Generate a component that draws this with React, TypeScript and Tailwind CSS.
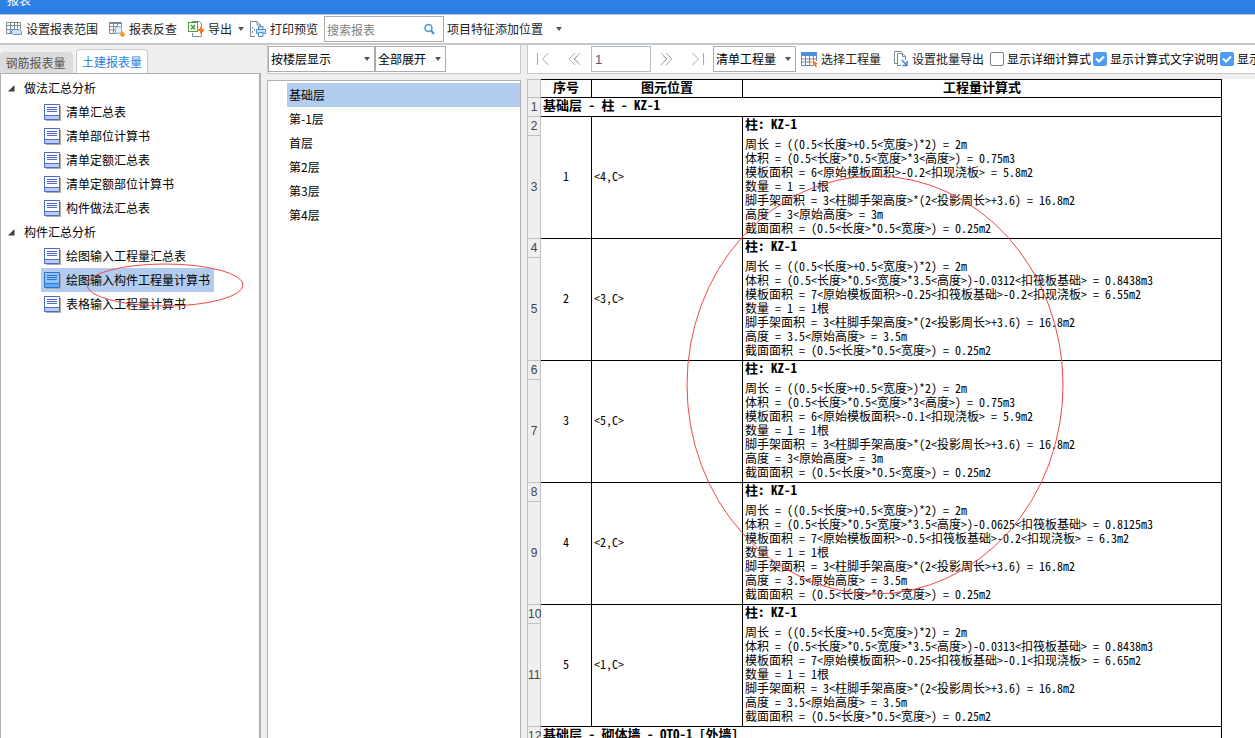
import React, { useState } from 'react';
import clsx from 'clsx';

const treeGroups = [
  {
    title: '做法汇总分析',
    items: ['清单汇总表', '清单部位计算书', '清单定额汇总表', '清单定额部位计算书', '构件做法汇总表'],
  },
  {
    title: '构件汇总分析',
    items: ['绘图输入工程量汇总表', '绘图输入构件工程量计算书', '表格输入工程量计算书'],
  },
];

const floors = ['基础层', '第-1层', '首层', '第2层', '第3层', '第4层'];

const entries = [
  {
    position: '<4,C>',
    volume: '体积 = (0.5<长度>*0.5<宽度>*3<高度>) = 0.75m3',
    formwork: '模板面积 = 6<原始模板面积>-0.2<扣现浇板> = 5.8m2',
    height: '高度 = 3<原始高度> = 3m',
  },
  {
    position: '<3,C>',
    volume: '体积 = (0.5<长度>*0.5<宽度>*3.5<高度>)-0.0312<扣筏板基础> = 0.8438m3',
    formwork: '模板面积 = 7<原始模板面积>-0.25<扣筏板基础>-0.2<扣现浇板> = 6.55m2',
    height: '高度 = 3.5<原始高度> = 3.5m',
  },
  {
    position: '<5,C>',
    volume: '体积 = (0.5<长度>*0.5<宽度>*3<高度>) = 0.75m3',
    formwork: '模板面积 = 6<原始模板面积>-0.1<扣现浇板> = 5.9m2',
    height: '高度 = 3<原始高度> = 3m',
  },
  {
    position: '<2,C>',
    volume: '体积 = (0.5<长度>*0.5<宽度>*3.5<高度>)-0.0625<扣筏板基础> = 0.8125m3',
    formwork: '模板面积 = 7<原始模板面积>-0.5<扣筏板基础>-0.2<扣现浇板> = 6.3m2',
    height: '高度 = 3.5<原始高度> = 3.5m',
  },
  {
    position: '<1,C>',
    volume: '体积 = (0.5<长度>*0.5<宽度>*3.5<高度>)-0.0313<扣筏板基础> = 0.8438m3',
    formwork: '模板面积 = 7<原始模板面积>-0.25<扣筏板基础>-0.1<扣现浇板> = 6.65m2',
    height: '高度 = 3.5<原始高度> = 3.5m',
  },
];

const Caret: React.FC<{ className?: string }> = ({ className }) => (
  <svg className={className} width="6" height="4" viewBox="0 0 6 4">
    <path d="M0 0h6L3 4z" fill="#555" />
  </svg>
);

const RangeIcon = () => (
  <svg width="17" height="16" viewBox="0 0 17 16" fill="none" stroke="#7b8a94">
    <path d="M9 12.5H.5V1.5h14V8M.5 4.5h14M.5 8.5h9M4.5 1.5v11M8.5 1.5v7M11.5 1.5v6" />
    <path d="M7.5 8.5h6l2 2v3h-8l-2-1.500v-2z" fill="#cfe2fa" stroke="#5b95d8" />
  </svg>
);

const LookupIcon = () => (
  <svg width="17" height="16" viewBox="0 0 17 16" fill="none" stroke="#7b8a94">
    <path d="M7 12.500H.5V1.500h12V6M.5 5.500h8M.5 9h6M4.500 1.500v11M8.500 1.500v5" />
    <path d="M1 2h11" strokeWidth="2" />
    <circle cx="9.500" cy="9" r="3.500" fill="#e3efff" stroke="#7aa5dd" />
    <path d="M13.500 10.500l3 3-3 3-3-3z" fill="#f29a1f" stroke="none" />
  </svg>
);

const ExportIcon = () => (
  <svg width="17" height="16" viewBox="0 0 17 16" fill="none">
    <path d="M4 1V.5h7.500l2 2.500v3M4.500 12v3.500h9V12" stroke="#7b8a94" />
    <rect x=".5" y="1.500" width="9" height="9" fill="#fff" stroke="#4f9a3c" />
    <path d="M3 4l4 4.500M7 4L3 8.500" stroke="#4f9a3c" strokeWidth="1.500" />
    <path d="M9 8h3V5l4.500 4.500L12 13v-3H9z" fill="#ee7a22" />
  </svg>
);

const PreviewIcon = () => (
  <svg width="17" height="16" viewBox="0 0 17 16" fill="none">
    <path d="M5 15.500H.5V.5H7L10.500 4v1M7 .5V4h3.500" stroke="#7b8a94" />
    <path d="M2.500 6v2M2.500 10v2M4.500 8v2" stroke="#7b8a94" />
    <path d="M6.500 8.500h9v4h-9zM8.500 5.500h4.500v3H8.500z" fill="#cfe2fa" stroke="#4a8fdb" />
    <path d="M8.500 11.500H13v4H8.500z" fill="#fff" stroke="#4a8fdb" />
  </svg>
);

const SelectIcon = () => (
  <svg width="17" height="16" viewBox="0 0 17 16" fill="none">
    <path d="M.5 4v10.500H12M15.500 4v6M.5 8h15M.5 11h11M4.500 5v9.500M8.500 5v9.500M12.500 5v6" stroke="#7b8a94" />
    <path d="M0 1h16v4H0z" fill="#4a90e2" />
    <path d="M12 9l5 4-2 .5 1 2.500h-1.500l-1-2-1.500 1z" fill="#ee7a22" />
  </svg>
);

const BatchIcon = () => (
  <svg width="15" height="16" viewBox="0 0 15 16" fill="none" stroke="#7b8a94">
    <path d="M3 12.500H.5V.5h7l1 1" />
    <path d="M7 14.500H3.500v-12h5l3 3V9M8.500 2.500v3h3" />
    <path d="M8 9l4 4.500M13 10v4.500H8.500" stroke="#3c86d6" strokeWidth="1.500" />
  </svg>
);

const ReportIcon: React.FC<{ active: boolean }> = ({ active }) => (
  <svg width="17" height="17" viewBox="0 0 17 17">
    <path d="M2 16.500h14.500V2" fill="none" stroke="#a9a9b4" />
    <path d="M.5.5h15v15H.5z" fill={active ? '#8fc4fa' : '#fff'} stroke={active ? '#2f74cf' : '#4a6cc4'} />
    <path d="M1 11h14v4H1z" fill={active ? '#66a8f5' : '#b9ccfa'} />
    <path d="M.5 11.500h15M3 3.500h10M3 5.500h10M3 7.500h10" stroke={active ? '#2f74cf' : '#4a6cc4'} />
  </svg>
);

const NavButton: React.FC<{ label: string; d: string }> = ({ label, d }) => (
  <button aria-label={label} className="flex h-6 w-[31px] shrink-0 items-center justify-center">
    <svg width="15" height="14" viewBox="0 0 15 14" fill="none" stroke="#a8a8a8">
      <path d={d} />
    </svg>
  </button>
);

const ToolButton: React.FC<{ icon: React.ReactNode; label: string; menu?: boolean }> = ({ icon, label, menu }) => (
  <button className="flex h-6 shrink-0 items-center gap-[3px] text-[#222]">
    {icon}
    <span>{label}</span>
    {menu && <Caret className="ml-[3px]" />}
  </button>
);

const Dropdown: React.FC<{ label: string; value: string; className: string }> = ({ label, value, className }) => (
  <div className={clsx('relative h-[26px] shrink-0', className)}>
    <select aria-label={label} className="h-full w-full appearance-none border border-[#adadad] bg-white pl-0.5 text-black">
      <option>{value}</option>
    </select>
    <Caret className="pointer-events-none absolute top-[11px] right-[5px]" />
  </div>
);

const CheckOption: React.FC<{ label: string; defaultChecked?: boolean }> = ({ label, defaultChecked }) => (
  <label className="flex shrink-0 items-center gap-[3px]">
    <span className="relative h-[14px] w-[14px]">
      <input
        type="checkbox"
        defaultChecked={defaultChecked}
        className="peer block h-full w-full appearance-none rounded-xs border border-[#808080] bg-white checked:border-[#4f9cf5] checked:bg-[#4f9cf5]"
      />
      <svg className="pointer-events-none absolute inset-0 hidden peer-checked:block" viewBox="0 0 14 14" fill="none">
        <path d="M3 6.500L6 9.500l5-5" stroke="#fff" strokeWidth="2" />
      </svg>
    </span>
    {label}
  </label>
);

const RowNumber: React.FC<{ children?: React.ReactNode }> = ({ children }) => (
  <th className="border-x border-b border-[#c0c0c0] bg-[#efefef] p-0 font-['Liberation_Sans',sans-serif] text-xs leading-none font-normal text-[#444]">
    {children}
  </th>
);

const ReportTable = () => (
  <table className="w-[695px] table-fixed border-separate border-spacing-0 bg-white text-black [font-feature-settings:'hwid']">
    <colgroup>
      <col className="w-[14px]" />
      <col className="w-[51px]" />
      <col className="w-[151px]" />
      <col />
    </colgroup>
    <thead>
      <tr className="h-[19px] text-[13px] leading-[14px]">
        <td className="border border-[#c0c0c0] bg-[#efefef] p-0" />
        <th className="border-y border-r border-black p-0 align-top">序号</th>
        <th className="border-y border-r border-black p-0 align-top">图元位置</th>
        <th className="border-y border-r border-black p-0 align-top">工程量计算式</th>
      </tr>
    </thead>
    <tbody>
      <tr className="h-[19px] text-[13px] leading-[14px]">
        <RowNumber>1</RowNumber>
        <td colSpan={3} className="border-r border-b border-black p-0 pl-0.5 align-top font-bold">基础层 - 柱 - KZ-1</td>
      </tr>
      {entries.map((entry, i) => (
        <React.Fragment key={entry.position}>
          <tr className="h-[19px]">
            <RowNumber>{i * 2 + 2}</RowNumber>
            <td rowSpan={2} className="border-r border-b border-black p-0 pb-1 text-center">{i + 1}</td>
            <td rowSpan={2} className="border-r border-b border-black p-0 pb-1 pl-0.5">{entry.position}</td>
            <td className="border-r border-black p-0 pl-0.5 align-top text-[13px] leading-[14px] font-bold">柱: KZ-1</td>
          </tr>
          <tr className="h-[103px]">
            <RowNumber>{i * 2 + 3}</RowNumber>
            <td className="border-r border-b border-black pt-px pr-0 pb-[3px] pl-0.5 leading-[14px] whitespace-nowrap">
              <p>周长 = ((0.5&lt;长度&gt;+0.5&lt;宽度&gt;)*2) = 2m</p>
              <p>{entry.volume}</p>
              <p>{entry.formwork}</p>
              <p>数量 = 1 = 1根</p>
              <p>脚手架面积 = 3&lt;柱脚手架高度&gt;*(2&lt;投影周长&gt;+3.6) = 16.8m2</p>
              <p>{entry.height}</p>
              <p>截面面积 = (0.5&lt;长度&gt;*0.5&lt;宽度&gt;) = 0.25m2</p>
            </td>
          </tr>
        </React.Fragment>
      ))}
      <tr className="h-[19px] text-[13px] leading-[14px]">
        <RowNumber>12</RowNumber>
        <td colSpan={3} className="border-r border-b border-black p-0 pl-0.5 align-top font-bold">基础层 - 砌体墙 - QTQ-1 [外墙]</td>
      </tr>
    </tbody>
  </table>
);

const App: React.FC = () => {
  const [report, setReport] = useState('绘图输入构件工程量计算书');
  const [floor, setFloor] = useState('基础层');

  return (
    <div className="flex h-screen flex-col overflow-hidden bg-[#efefef] font-['Noto_Sans_CJK_SC',sans-serif] text-xs whitespace-nowrap text-black">
      <header className="h-[14px] shrink-0 overflow-hidden bg-[#2d7fe3] px-[7px] text-white">
        <h1 className="-mt-2 leading-4">报表</h1>
      </header>

      <div className="flex h-[31px] shrink-0 items-center border-t border-b-2 border-t-[#b9c6d6] border-b-[#c3c9cc] bg-white pl-1.5">
        <div className="flex items-center gap-[11px]">
          <ToolButton icon={<RangeIcon />} label="设置报表范围" />
          <ToolButton icon={<LookupIcon />} label="报表反查" />
          <ToolButton icon={<ExportIcon />} label="导出" menu />
        </div>
        <div className="ml-1.5 flex items-center gap-1.5">
          <ToolButton icon={<PreviewIcon />} label="打印预览" />
          <div className="relative h-[26px] w-[120px]">
            <input
              type="search"
              aria-label="搜索报表"
              placeholder="搜索报表"
              className="h-full w-full border border-[#adadad] bg-white pr-6 pl-0.5 placeholder:text-[#808080]"
            />
            <svg className="absolute top-[7px] right-2 h-3 w-3" viewBox="0 0 12 12" fill="none" stroke="#4597cf">
              <circle cx="4.500" cy="5" r="3.500" strokeWidth="1.500" />
              <path d="M7 7.500l3 3.500" strokeWidth="2" />
            </svg>
          </div>
        </div>
        <button className="ml-[3px] flex h-6 items-center gap-[13px] text-[#222]">
          项目特征添加位置
          <Caret />
        </button>
      </div>

      <div className="flex min-h-0 flex-1 gap-1.5">
        <aside className="flex w-[261px] shrink-0 flex-col">
          <div role="tablist" className="flex h-7 shrink-0 items-end gap-[3px]">
            <button role="tab" aria-selected="false" className="h-[21px] w-[73px] rounded-t-sm bg-[#dcdcdc] pr-0.5 text-[#555]">
              钢筋报表量
            </button>
            <button role="tab" aria-selected="true" className="h-6 w-[72px] rounded-t-sm border border-b-0 border-[#c4c8cc] bg-white text-[#2d7fe3]">
              土建报表量
            </button>
          </div>
          <nav className="relative flex-1 border-t border-r-2 border-l border-[#b0b0b4] bg-white pt-0.5">
            {treeGroups.map((group) => (
              <div key={group.title}>
                <h2 className="flex h-6 items-center gap-[9px] pl-[7px]">
                  <svg width="7" height="7" viewBox="0 0 7 7">
                    <path d="M6.500 0v6.500H0z" fill="#404040" />
                  </svg>
                  {group.title}
                </h2>
                <ul className="pl-10">
                  {group.items.map((item) => (
                    <li key={item}>
                      <button
                        onClick={() => setReport(item)}
                        className={clsx('flex h-6 items-center gap-[5px] pr-1 pl-[3px]', report === item && 'bg-[#b1ccee]')}
                      >
                        <ReportIcon active={report === item} />
                        {item}
                      </button>
                    </li>
                  ))}
                </ul>
              </div>
            ))}
            <svg className="pointer-events-none absolute top-[189px] left-[85px]" width="158" height="44" viewBox="0 0 158 44">
              <ellipse cx="79" cy="22" rx="78" ry="21" fill="none" stroke="#f04848" />
            </svg>
          </nav>
        </aside>

        <section className="flex w-[254px] shrink-0 flex-col gap-1.5">
          <div className="flex h-[29px] shrink-0 items-center border border-t-0 border-[#c3c9cc] bg-white">
            <Dropdown label="显示方式" value="按楼层显示" className="w-[107px]" />
            <Dropdown label="展开层级" value="全部展开" className="w-[71px]" />
          </div>
          <ul className="flex-1 border border-b-0 border-[#b0b0b4] bg-white pt-0.5 pl-[19px]">
            {floors.map((item) => (
              <li key={item}>
                <button
                  onClick={() => setFloor(item)}
                  className={clsx('h-6 w-full pl-0.5 text-left', floor === item && 'bg-[#b1ccee]')}
                >
                  {item}
                </button>
              </li>
            ))}
          </ul>
        </section>

        <main className="flex min-w-0 flex-1 flex-col gap-[5px]">
          <div className="flex h-[29px] shrink-0 items-center overflow-hidden border-b border-l border-[#c3c9cc] bg-white">
            <NavButton label="第一页" d="M1.500 1v12M12.500 1l-6 6 6 6" />
            <NavButton label="上一页" d="M8 1L2 7l6 6M13 1L7 7l6 6M10.500 4l-3 3 3 3" />
            <input
              aria-label="页码"
              defaultValue="1"
              className="ml-px h-[26px] w-[60px] shrink-0 border border-[#b4bcc4] bg-white pl-[3px] font-['Liberation_Sans',sans-serif] text-[13px] text-[#4a6078]"
            />
            <NavButton label="下一页" d="M2 1l6 6-6 6M7 1l6 6-6 6M4.500 4l3 3-3 3" />
            <NavButton label="最后一页" d="M2.500 1l6 6-6 6M13.500 1v12" />
            <Dropdown label="工程量类型" value="清单工程量" className="w-[83px]" />
            <div className="ml-[5px] flex shrink-0 gap-[13px]">
              <ToolButton icon={<SelectIcon />} label="选择工程量" />
              <ToolButton icon={<BatchIcon />} label="设置批量导出" />
            </div>
            <div className="ml-1.5 flex shrink-0 gap-0.5">
              <CheckOption label="显示详细计算式" />
              <CheckOption label="显示计算式文字说明" defaultChecked />
              <CheckOption label="显示" defaultChecked />
            </div>
          </div>
          <div className="relative min-h-0 flex-1 overflow-hidden bg-white">
            <ReportTable />
            <svg className="pointer-events-none absolute top-24 left-[158px]" width="380" height="420" viewBox="0 0 380 420">
              <ellipse cx="190" cy="210" rx="188" ry="209" fill="none" stroke="#f04848" />
            </svg>
          </div>
        </main>
      </div>
    </div>
  );
};

export default App;
